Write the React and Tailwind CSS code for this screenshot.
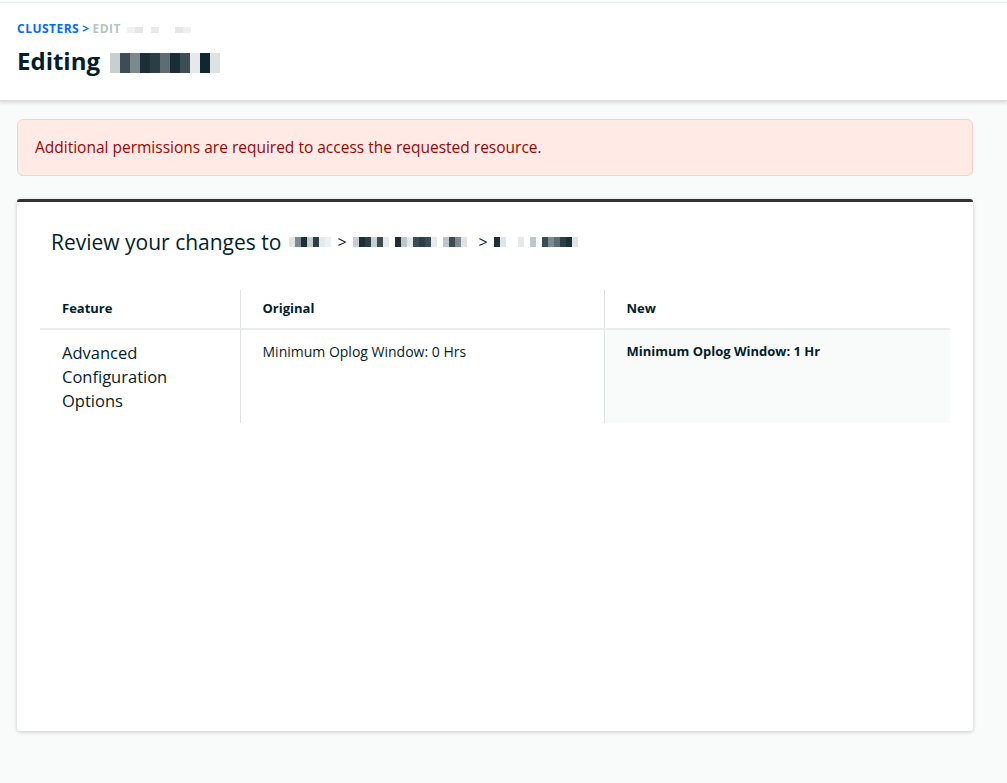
import React from 'react';

const font = { fontFamily: '"Open Sans", Lato, sans-serif' };

function Blur({ cells, h = 'h-[8px]', w = 'w-[7px]' }) {
    // pixelated placeholder for redacted text
    return (
        <span className="inline-flex items-center align-middle">
            {cells.map((c, i) => (
                <span key={i} className={`inline-block ${h} ${w} ${c}`} />
            ))}
        </span>
    );
}

const g1 = ['bg-[#e1e4e5]', 'bg-[#7d8a90]', 'bg-[#1b2f38]', 'bg-[#c8cdd0]', 'bg-[#2b3d45]', 'bg-[#e6e9ea]', 'bg-[#eef0f1]'];
const g2 = ['bg-[#c8cdd0]', 'bg-[#1b2f38]', 'bg-[#2b3d45]', 'bg-[#c8cdd0]', 'bg-[#3c4c54]', 'bg-[#e6e9ea]', 'bg-white', 'bg-[#1b2f38]', 'bg-[#bfc6c9]', 'bg-[#e6e9ea]', 'bg-[#3c4c54]', 'bg-[#2b3d45]', 'bg-[#3c4c54]', 'bg-[#e6e9ea]', 'bg-white', 'bg-[#bfc6c9]', 'bg-[#3c4c54]', 'bg-[#7d8a90]', 'bg-[#e1e4e5]', 'bg-white'];
const g3 = ['bg-[#1b2f38]', 'bg-[#e1e4e5]', 'bg-white', 'bg-white', 'bg-[#e6e9ea]', 'bg-white', 'bg-[#bfc6c9]', 'bg-white', 'bg-[#3c4c54]', 'bg-[#7d8a90]', 'bg-[#5e6d73]', 'bg-[#2b3d45]', 'bg-[#1b2f38]', 'bg-[#e1e4e5]'];

export default function App() {
    return (
        <div className="min-h-screen bg-[#f9fbfa] text-[#001e2b]" style={font}>
            <div className="h-[3px] bg-[#f9fbfa] border-b border-[#e8edeb]" />
            <header className="bg-white px-[17px] pt-[17px] h-[98px] shadow-[0_2px_3px_rgba(0,0,0,0.12)] border-b border-[#dcdcdc]">
                <div className="flex items-center text-[12px] font-bold tracking-[0.04em]">
                    <span className="text-[#016bf8]">CLUSTERS</span>
                    <span className="text-[#016bf8] mx-[3px]">&gt;</span>
                    <span className="text-[#b8c4c2]">EDIT</span>
                    <span className="ml-[6px]"><Blur h="h-[6px]" w="w-[8px]" cells={['bg-[#f1f1f1]', 'bg-[#e6e6e6]', 'bg-white', 'bg-[#e9e9e9]', 'bg-white', 'bg-white', 'bg-[#e6e6e6]', 'bg-[#efefef]']} /></span>
                </div>
                <div className="flex items-center mt-[7px]">
                    <h1 className="text-[24px] font-bold leading-[32px]">Editing</h1>
                    <span className="ml-[10px]"><Blur h="h-[20px]" w="w-[10px]" cells={['bg-[#c9ced1]', 'bg-[#3d4d55]', 'bg-[#7c8a90]', 'bg-[#1b2f38]', 'bg-[#2b3d45]', 'bg-[#5e6d73]', 'bg-[#1a2c35]', 'bg-[#3d4d55]', 'bg-[#e6e9ea]', 'bg-[#102631]', 'bg-[#dfe2e3]']} /></span>
                </div>
            </header>

            <div className="px-[17px] pt-[18px] pb-[52px] pr-[34px]">
                <div className="h-[57px] flex items-center px-[17px] bg-[#ffeae5] border border-[#ffcdc7] rounded-[6px] text-[#970606] text-[15.5px]">
                    Additional permissions are required to access the requested resource.
                </div>

                <div className="mt-[23px] h-[532px] bg-white border-t-[3px] border-[#333] rounded-[3px] shadow-[0_1px_4px_rgba(0,0,0,0.2)] px-[23px] pt-[26px]">
                    <div className="flex items-center px-[11px] text-[21px] leading-[28px]">
                        <span>Review your changes to</span>
                        <span className="ml-[8px] flex items-center gap-[6px] text-[16px]">
                            <Blur w="w-[6px]" h="h-[10px]" cells={g1} />
                            <span>&gt;</span>
                            <Blur w="w-[6px]" h="h-[10px]" cells={g2} />
                            <span>&gt;</span>
                            <Blur w="w-[6px]" h="h-[10px]" cells={g3} />
                        </span>
                    </div>

                    <table className="mt-[34px] w-full border-collapse text-left">
                        <thead>
                            <tr className="border-b-[2px] border-[#e8edeb]">
                                <th className="w-[200px] h-[39px] px-[22px] text-[13px] font-bold">Feature</th>
                                <th className="w-[364px] h-[39px] px-[22px] text-[13px] font-bold border-l border-[#dfe4e2]">Original</th>
                                <th className="h-[39px] px-[22px] text-[13px] font-bold border-l border-[#dfe4e2]">New</th>
                            </tr>
                        </thead>
                        <tbody>
                            <tr>
                                <td className="align-top px-[22px] pt-[11px] pb-[10px] text-[16.5px] leading-[24px] w-[200px]">
                                    Advanced<br />Configuration<br />Options
                                </td>
                                <td className="align-top px-[22px] pt-[12px] text-[14px] leading-[19px] border-l border-[#dfe4e2]">
                                    Minimum Oplog Window: 0 Hrs
                                </td>
                                <td className="align-top px-[22px] pt-[12px] text-[13px] leading-[19px] font-bold bg-[#f9fbfa] border-l border-[#dfe4e2]">
                                    Minimum Oplog Window: 1 Hr
                                </td>
                            </tr>
                        </tbody>
                    </table>
                </div>
            </div>
        </div>
    );
}
